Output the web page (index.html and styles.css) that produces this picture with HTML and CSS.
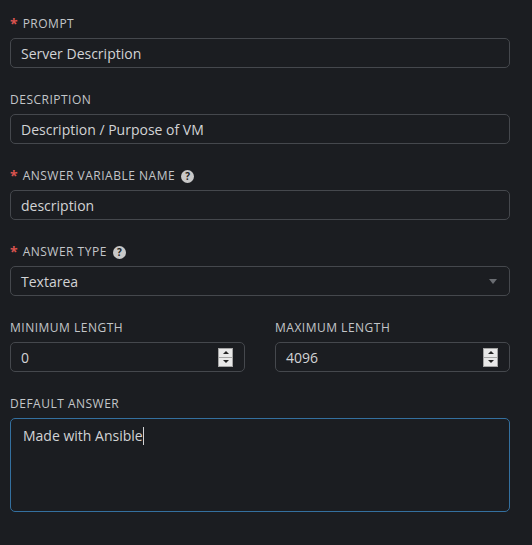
FILE: index.html
```html
<!DOCTYPE html>
<html lang="en">
<head>
<meta charset="utf-8">
<title>Survey question</title>
<link rel="stylesheet" href="styles.css">
</head>
<body>
<form class="form">
  <div class="field">
    <label class="label"><span class="req">*</span>PROMPT</label>
    <div class="input">Server Description</div>
  </div>
  <div class="field">
    <label class="label">DESCRIPTION</label>
    <div class="input">Description / Purpose of VM</div>
  </div>
  <div class="field">
    <label class="label"><span class="req">*</span>ANSWER VARIABLE NAME <span class="help">?</span></label>
    <div class="input">description</div>
  </div>
  <div class="field">
    <label class="label"><span class="req">*</span>ANSWER TYPE <span class="help">?</span></label>
    <div class="input select"><span>Textarea</span><span class="caret-down"></span></div>
  </div>
  <div class="row">
    <div class="field">
      <label class="label">MINIMUM LENGTH</label>
      <div class="input number"><span>0</span><span class="spin"><span class="up"></span><span class="down"></span></span></div>
    </div>
    <div class="field">
      <label class="label">MAXIMUM LENGTH</label>
      <div class="input number"><span>4096</span><span class="spin"><span class="up"></span><span class="down"></span></span></div>
    </div>
  </div>
  <div class="field">
    <label class="label">DEFAULT ANSWER</label>
    <div class="textarea">Made with Ansible<span class="cursor"></span></div>
  </div>
</form>
</body>
</html>
```

FILE: styles.css
```css
html, body {
  margin: 0;
  padding: 0;
  background: #1b1d21;
}
body {
  font-family: "Open Sans", "Noto Sans", sans-serif;
  color: #d2d3d5;
}
.form {
  display: flex;
  flex-direction: column;
  gap: 22px;
  padding: 14px 22px 0 10px;
}
.row {
  display: grid;
  grid-template-columns: 1fr 1fr;
  gap: 30px;
}
.field {
  display: flex;
  flex-direction: column;
  gap: 6px;
}
.label {
  box-sizing: border-box;
  display: flex;
  align-items: center;
  height: 18px;
  padding-top: 2px;
  font-size: 12px;
  line-height: 16px;
  letter-spacing: 0.5px;
  color: #c3c6c9;
}
.req {
  color: #d9534f;
  font-weight: 700;
  font-size: 14px;
  margin-right: 5px;
  line-height: 16px;
  letter-spacing: 0;
}
.help {
  display: inline-flex;
  align-items: center;
  justify-content: center;
  width: 13px;
  height: 13px;
  margin-left: 6px;
  border-radius: 50%;
  background: #c8c8c8;
  color: #1b1d21;
  font-size: 10px;
  font-weight: 700;
  line-height: 13px;
  letter-spacing: 0;
}
.input {
  box-sizing: border-box;
  height: 30px;
  border: 1px solid #45484d;
  border-radius: 5px;
  padding: 0 10px;
  font-size: 14px;
  display: flex;
  align-items: center;
  justify-content: space-between;
}
.caret-down {
  width: 0;
  height: 0;
  border-left: 4px solid transparent;
  border-right: 4px solid transparent;
  border-top: 5px solid #6a6d72;
  margin-right: 2px;
}
.number {
  padding-right: 11px;
}
.spin {
  display: flex;
  flex-direction: column;
  width: 15px;
  height: 19px;
  box-sizing: border-box;
  border: 1px solid #a4a4a4;
  background: #e8e8e8;
}
.spin span {
  flex: 1;
  display: flex;
  align-items: center;
  justify-content: center;
}
.spin .up {
  border-bottom: 1px solid #a4a4a4;
}
.spin .up::after {
  content: "";
  border-left: 3px solid transparent;
  border-right: 3px solid transparent;
  border-bottom: 3px solid #222;
}
.spin .down::after {
  content: "";
  border-left: 3px solid transparent;
  border-right: 3px solid transparent;
  border-top: 3px solid #222;
}
.textarea {
  box-sizing: border-box;
  height: 94px;
  border: 1px solid #34709f;
  border-radius: 5px;
  padding: 6px 12px;
  font-size: 14px;
  line-height: 21px;
}
.cursor {
  display: inline-block;
  width: 1px;
  height: 18px;
  background: #d2d3d5;
  vertical-align: -4px;
}
```
